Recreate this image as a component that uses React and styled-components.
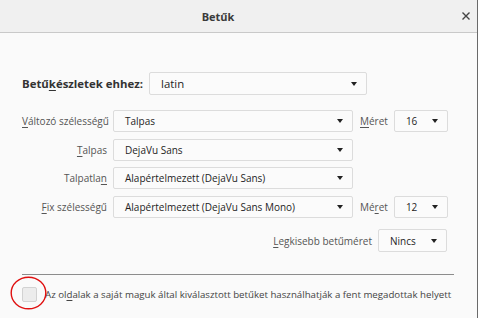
import React from "react";
import styled, { createGlobalStyle } from "styled-components";

const Global = createGlobalStyle`
  html, body { margin: 0; padding: 0; background: #ffffff; }
  body { font-family: "Open Sans", "Noto Sans", sans-serif; font-size: 10px; color: #333; }
  * { box-sizing: border-box; }
`;

const Window = styled.div`
  width: 478px;
  height: 318px;
  background: #fafafa;
  border-right: 1px solid #6a6a6a;
  display: flex;
  flex-direction: column;
`;

const TitleBar = styled.div`
  height: 33px;
  flex: none;
  background: #f0f0f0;
  border-bottom: 1px solid #c9c9c9;
  display: flex;
  align-items: center;
  justify-content: center;
  padding-right: 41px;
  position: relative;
`;

const Title = styled.div`
  font-weight: 700;
  font-size: 11px;
  color: #3a3a3a;
`;

const Close = styled.button`
  position: absolute;
  right: 4px;
  top: 9px;
  width: 14px;
  height: 14px;
  padding: 0;
  border: 0;
  background: transparent;
  display: flex;
  align-items: center;
  justify-content: center;
`;

const Body = styled.div`
  padding: 39px 23px 0 22px;
  display: flex;
  flex-direction: column;
`;

const Row = styled.div`
  display: flex;
  align-items: center;
  height: ${(p) => p.$h || 22}px;
  justify-content: ${(p) => (p.$end ? "flex-end" : "flex-start")};
  padding-right: ${(p) => p.$pr || 0}px;
  margin-top: ${(p) => p.$mt || 0}px;
`;

const Grid = styled.div`
  display: flex;
  flex-direction: column;
  gap: 6.7px;
  margin-top: 15px;
`;

const Label = styled.label`
  color: ${(p) => (p.$bold ? "#333" : "#555")};
  font-weight: ${(p) => (p.$bold ? 700 : 400)};
  font-size: ${(p) => (p.$bold ? "11.4px" : "10px")};
  width: ${(p) => (p.$w ? p.$w + "px" : "auto")};
  text-align: ${(p) => (p.$right ? "right" : "left")};
  margin-right: ${(p) => p.$mr ?? 6}px;
  margin-left: ${(p) => p.$ml ?? 0}px;
  white-space: nowrap;
  flex: none;
`;

const U = styled.span`
  text-decoration: underline;
  text-underline-offset: 2px;
`;

const Select = styled.div`
  width: ${(p) => p.$w}px;
  height: ${(p) => p.$h || 22}px;
  flex: none;
  background: #fbfbfb;
  border: 1px solid #dcdcdc;
  border-radius: 2px;
  display: flex;
  align-items: center;
  justify-content: space-between;
  padding: 0 9px 0 11px;
  font-size: ${(p) => p.$fs || 10}px;
  color: #1e1e1e;
  white-space: nowrap;
`;

const Arrow = styled.span`
  width: 0;
  height: 0;
  border-left: 3.5px solid transparent;
  border-right: 3.5px solid transparent;
  border-top: 4px solid #222;
  flex: none;
`;

const Separator = styled.div`
  height: 1px;
  background: #8c8c8c;
  margin-top: 22px;
`;

const CheckRow = styled.div`
  display: flex;
  align-items: center;
  margin-top: 12px;
  height: 15px;
`;

const CheckWrap = styled.div`
  position: relative;
  width: 15px;
  height: 15px;
  flex: none;
  margin-right: 8px;
`;

const Box = styled.div`
  width: 15px;
  height: 15px;
  background: #ececec;
  border: 1px solid #d2d2d2;
  border-radius: 2px;
`;

const Ring = styled.svg`
  position: absolute;
  left: -12px;
  top: -11px;
  overflow: visible;
`;

const CheckText = styled.span`
  color: #444;
  font-size: 9.7px;
  white-space: nowrap;
`;

const Sel = ({ w, children, h, fs }) => (
  <Select $w={w} $h={h} $fs={fs}>
    <span>{children}</span>
    <Arrow />
  </Select>
);

export default function App() {
  return (
    <>
      <Global />
      <Window>
        <TitleBar>
          <Title>Betűk</Title>
          <Close aria-label="close">
            <svg width="10" height="10" viewBox="0 0 10 10">
              <path d="M1.5 1.5 L8.5 8.5 M8.5 1.5 L1.5 8.5" stroke="#444" strokeWidth="1.4" />
            </svg>
          </Close>
        </TitleBar>
        <Body>
          <Row $h={23}>
            <Label $bold $mr={6}>
              Betű<U>k</U>észletek ehhez:
            </Label>
            <Sel w={218} h={23} fs={11.4}>latin</Sel>
          </Row>
          <Grid>
            <Row>
              <Label $w={85} $right>
                <U>V</U>áltozó szélességű
              </Label>
              <Sel w={240}>Talpas</Sel>
              <Label $ml={7}>
                <U>M</U>éret
              </Label>
              <Sel w={54}>16</Sel>
            </Row>
            <Row>
              <Label $w={85} $right>
                <U>T</U>alpas
              </Label>
              <Sel w={240}>DejaVu Sans</Sel>
            </Row>
            <Row>
              <Label $w={85} $right>
                Talpatla<U>n</U>
              </Label>
              <Sel w={240}>Alapértelmezett (DejaVu Sans)</Sel>
            </Row>
            <Row>
              <Label $w={85} $right>
                <U>F</U>ix szélességű
              </Label>
              <Sel w={240}>Alapértelmezett (DejaVu Sans Mono)</Sel>
              <Label $ml={7}>
                Mé<U>r</U>et
              </Label>
              <Sel w={54}>12</Sel>
            </Row>
          </Grid>
          <Row $h={23} $end $pr={7} $mt={11}>
            <Label>
              <U>L</U>egkisebb betűméret
            </Label>
            <Sel w={69} h={23}>Nincs</Sel>
          </Row>
          <Separator />
          <CheckRow>
            <CheckWrap>
              <Box />
              <Ring width="36" height="34">
                <ellipse cx="18.5" cy="17" rx="17.3" ry="15.8" fill="none" stroke="#e01010" strokeWidth="1.4" />
              </Ring>
            </CheckWrap>
            <CheckText>
              Az ol<U>d</U>alak a saját maguk által kiválasztott betűket használhatják a fent megadottak helyett
            </CheckText>
          </CheckRow>
        </Body>
      </Window>
    </>
  );
}
